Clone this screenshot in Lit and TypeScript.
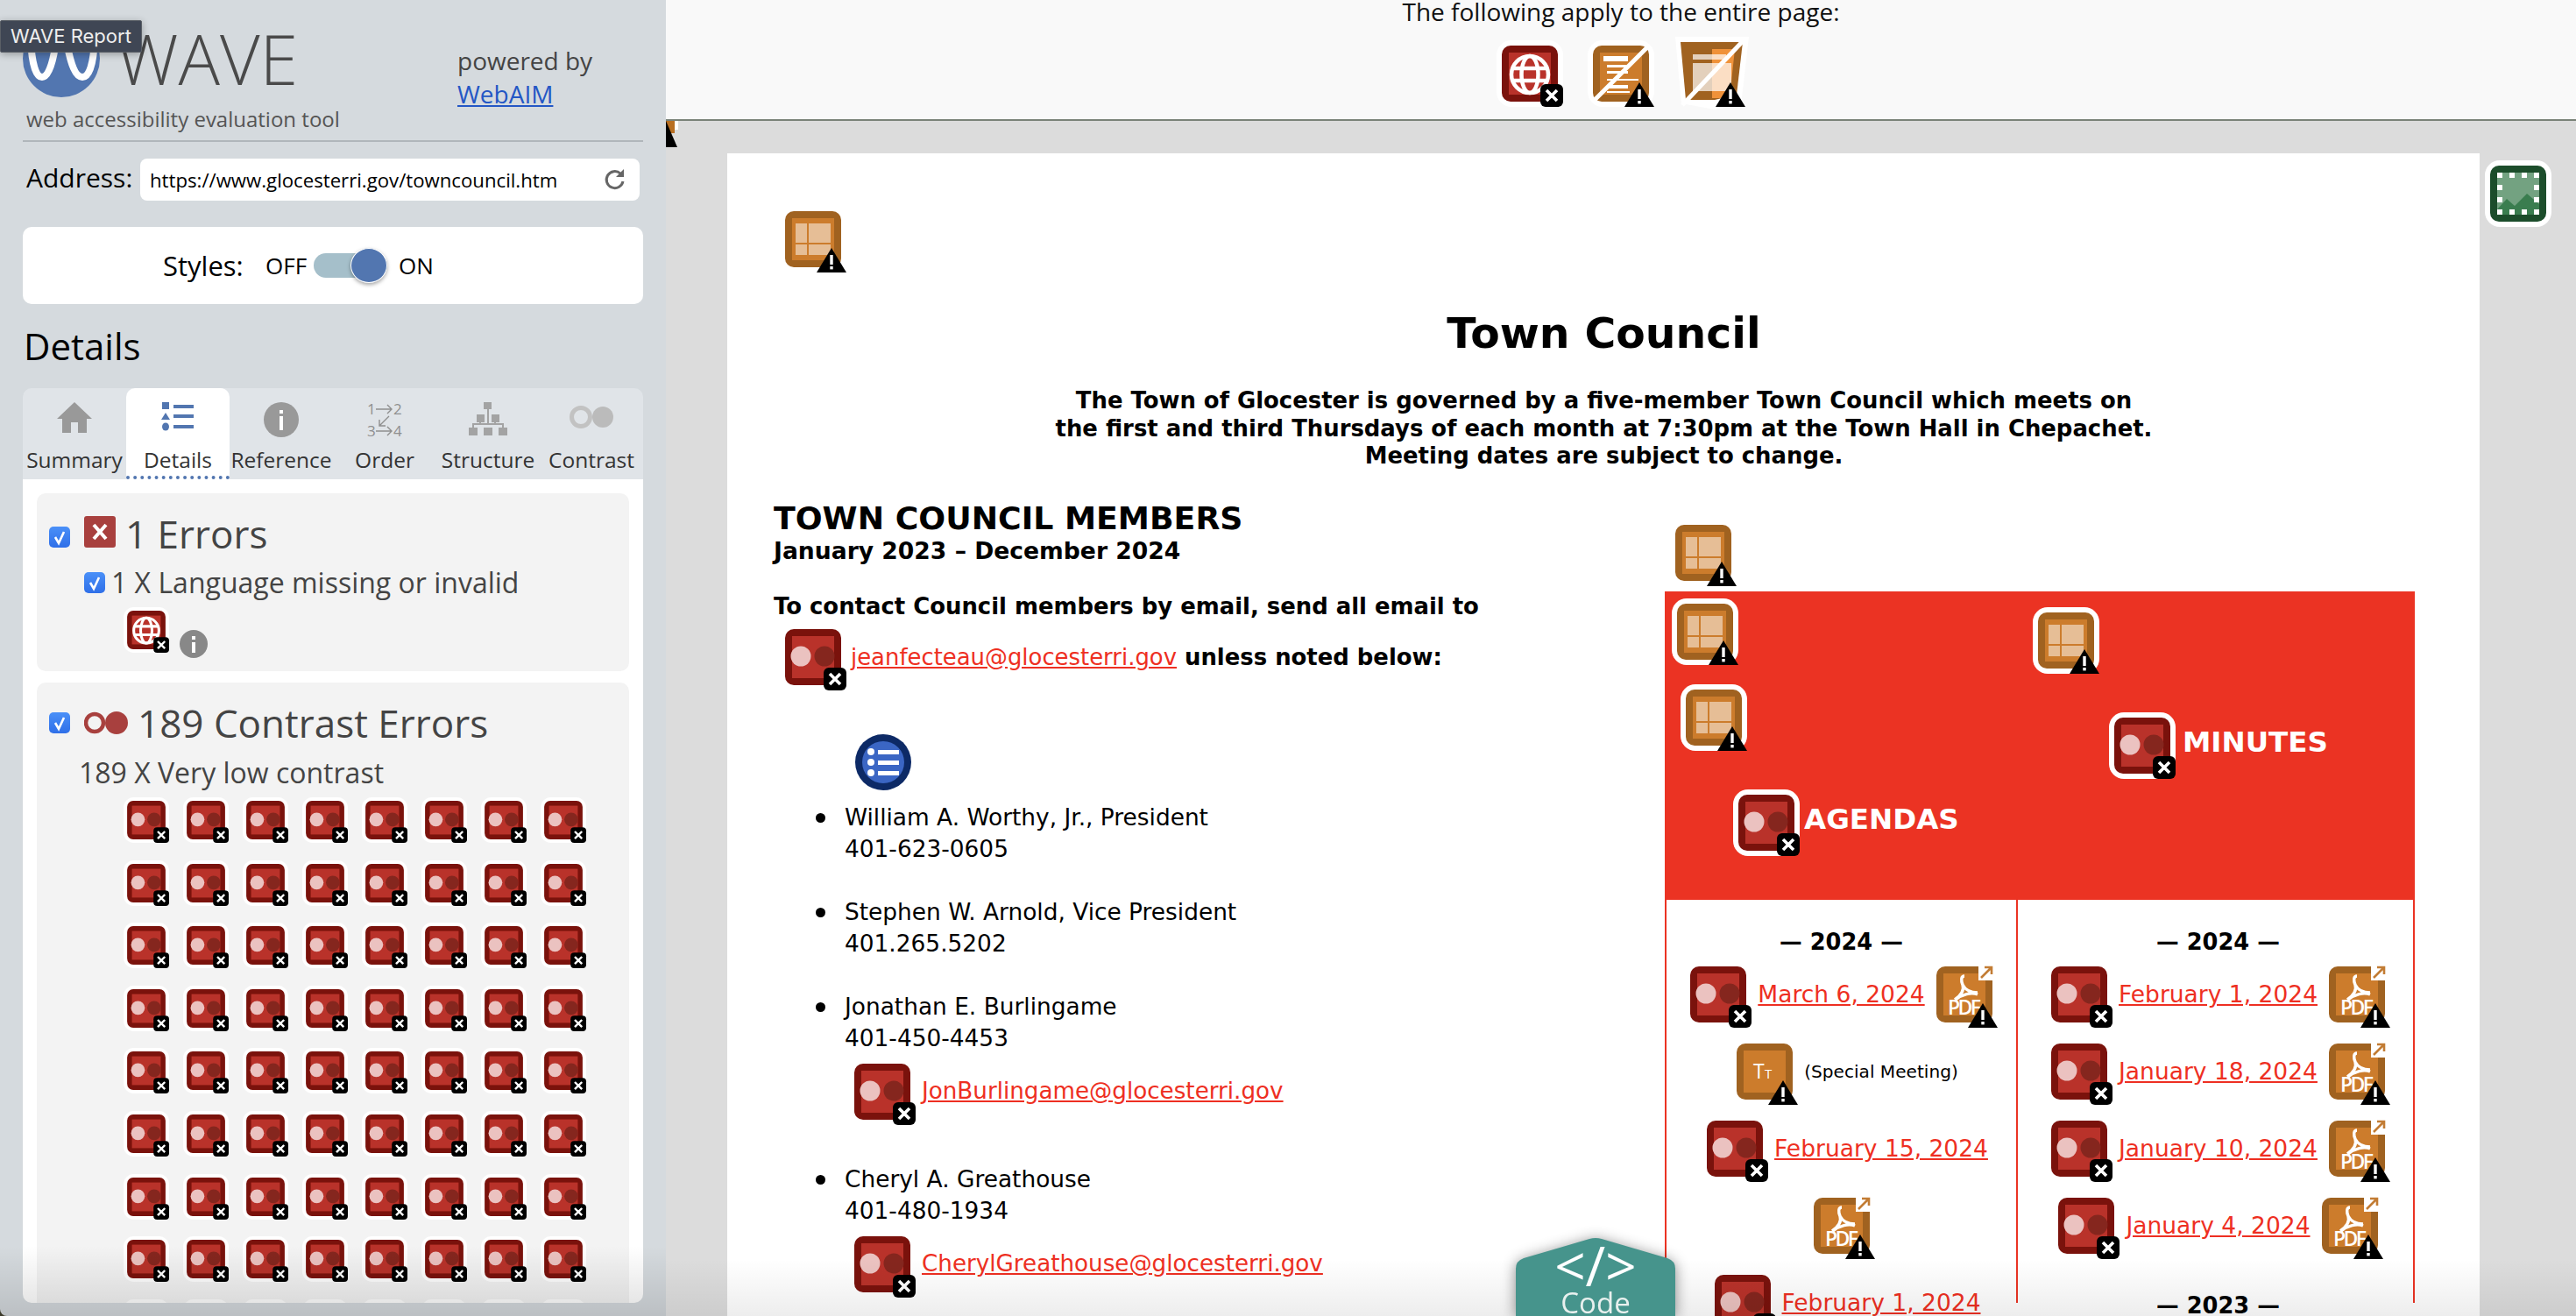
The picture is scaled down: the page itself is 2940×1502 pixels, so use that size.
import {LitElement, html, svg, css} from 'lit';
import {customElement} from 'lit/decorators.js';

const xBadge = svg`<rect x="44" y="44" width="26" height="26" rx="6" fill="#000"/><path d="M51 51l12 12M63 51l-12 12" stroke="#fff" stroke-width="3.6"/>`;
const warnBadge = svg`<path d="M53 42L70 70H36z" fill="#000"/><rect x="51.3" y="50" width="3.4" height="11" fill="#fff"/><rect x="51.3" y="63" width="3.4" height="3.4" fill="#fff"/>`;

function frame(dark: string, inner: string) {
  return svg`<rect width="64" height="64" rx="10" fill="${dark}"/><rect x="8" y="8" width="48" height="48" fill="${inner}"/>`;
}

const glyphs: Record<string, unknown> = {
  contrast: svg`${frame('#7a120c', '#b9322a')}<circle cx="18" cy="31" r="11.5" fill="#ebc2c0"/><circle cx="45" cy="31" r="11.5" fill="#85261e"/>${xBadge}`,
  lang: svg`${frame('#7a120c', '#b9322a')}<circle cx="32" cy="33" r="21" fill="#b9322a" stroke="#fff" stroke-width="4.5"/><ellipse cx="32" cy="33" rx="9.5" ry="21" fill="none" stroke="#fff" stroke-width="4.5"/><path d="M12 26h40M12 40h40" stroke="#fff" stroke-width="4.5"/>${xBadge}`,
  table: svg`${frame('#a06220', '#cc7c2c')}<path d="M12 14h13v22H12zM27 14h25v22H27zM12 38h13v12H12zM27 38h25v12H27z" fill="#e6be96"/>${warnBadge}`,
  doc: svg`${frame('#a06220', '#cc7c2c')}<path d="M12 12h28v6H12zM16 22h24v3H16zM16 29h24v3H16zM16 38h36v2H16zM18 45h22v4H18zM16 52h26v2H16z" fill="#fff"/><path d="M62 2L2 62" stroke="#fff" stroke-width="5"/>${warnBadge}`,
  tt: svg`${frame('#a06220', '#cc7c2c')}<text x="19" y="40" font-family="Open Sans" font-size="23" font-weight="400" fill="#fff">T</text><text x="32" y="40" font-family="Open Sans" font-size="15" font-weight="400" fill="#fff">T</text>${warnBadge}`,
  pdf: svg`${frame('#a06220', '#cc7c2c')}<path d="M32 11C28 11 28 16 30 21C32 27 28 33 21 38M30 21C33 27 40 30 47 30M22 38C29 32 40 29 47 32" fill="none" stroke="#fff" stroke-width="3.4"/><text x="32" y="55" text-anchor="middle" font-family="Open Sans" font-size="23" font-weight="600" fill="#fff" textLength="38">PDF</text><rect x="48" y="-2" width="19" height="18" fill="#fff"/><path d="M51 13L62 2M55 1h8v8" fill="none" stroke="#c27c34" stroke-width="2.6"/>${warnBadge}`,
  list: svg`<circle cx="32" cy="32" r="32" fill="#0d2a66"/><circle cx="32" cy="32" r="24" fill="#3b66c4"/><g fill="#fff"><circle cx="18" cy="20" r="4"/><circle cx="18" cy="32" r="4"/><circle cx="18" cy="44" r="4"/><path d="M26 18h24v5H26zM26 30h24v5H26zM26 42h24v5H26z"/></g>`,
  image: svg`${frame('#1c4d2b', '#73a281')}<path d="M8 50L19 38L28 46L42 32L56 44V56H8z" fill="#3a7d4f"/><path d="M8 8h6v6H8zM22 8h6v6h-6zM36 8h6v6h-6zM50 8h6v6h-6zM8 22h6v6H8zM50 22h6v6h-6zM8 36h6v6H8zM50 36h6v6h-6zM8 50h6v6H8zM22 50h6v6h-6zM36 50h6v6h-6zM50 50h6v6h-6z" fill="#fff"/>`,
};

function icon(name: string, halo = false, cls = '') {
  return html`<svg class="wi ${cls}" viewBox="-6 -6 76 76">
    ${halo ? svg`<rect x="-6" y="-6" width="76" height="76" rx="17" fill="#fff"/>` : ''}
    ${glyphs[name]}
  </svg>`;
}

const check = html`<span class="check"><svg viewBox="0 0 24 24" width="24" height="24"><path d="M7 12l4 7l6-13" fill="none" stroke="#fff" stroke-width="2.6"/></svg></span>`;

const shield = html`<svg class="shield" viewBox="0 0 84 84">
  <path d="M0 0H84L75 78L45 83L7 76z" fill="#fff"/>
  <path d="M6 6H77L70 66L45 72L12 72z" fill="#a06220"/>
  <path d="M42 14H68L62 70H42z" fill="#f0923a"/>
  <path d="M20 20H58V26H20zM20 30H64V58L58 62H20z" fill="#fff" opacity=".7"/>
  <path d="M78 4L8 78" stroke="#fff" stroke-width="5"/>
  <path d="M63 52L80 80H46z" fill="#000"/><rect x="61.3" y="60" width="3.4" height="11" fill="#fff"/><rect x="61.3" y="73" width="3.4" height="3.4" fill="#fff"/>
</svg>`;

const tabIcons = [
  html`<svg viewBox="0 0 40 36" width="40" height="36"><path d="M20 0L40 19H34V35H24V23H16V35H6V19H0z" fill="#999"/></svg>`,
  html`<svg viewBox="0 0 38 36" width="38" height="36"><path d="M1 0h8v8H1zM5 12l5 8H0zM14 3h23v4H14zM14 14h23v4H14zM14 26h23v4H14z" fill="#5276b0"/><ellipse cx="5" cy="28" rx="4" ry="4.5" fill="#5276b0"/></svg>`,
  html`<svg viewBox="0 0 40 40" width="40" height="40"><circle cx="20" cy="20" r="20" fill="#999"/><path d="M18 9h4v4h-4zM18 16h4v16h-4z" fill="#fff"/></svg>`,
  html`<svg viewBox="0 0 40 40" width="40" height="40"><g font-family="Open Sans" font-size="17" fill="#8f8f8f"><text x="0" y="14">1</text><text x="30" y="14">2</text><text x="0" y="39">3</text><text x="30" y="39">4</text></g><path d="M10 8h18M23 3l5 5l-5 5M10 33h18M23 28l5 5l-5 5M25 16L14 27M14 20v7h7" fill="none" stroke="#8f8f8f" stroke-width="1.4"/></svg>`,
  html`<svg viewBox="0 0 44 38" width="44" height="38"><path d="M17 0h9v8h-9zM9 14h9v9H9zM26 14h9v9h-9zM0 29h10v9H0zM17 29h10v9H17zM34 29h10v9H34z" fill="#a3a3a3"/><path d="M22 8v18M5 29v-4h34v4M13 23v2M30 23v2" fill="none" stroke="#a3a3a3" stroke-width="2"/></svg>`,
  html`<svg viewBox="0 0 50 34" width="50" height="34"><circle cx="13" cy="17" r="10.5" fill="none" stroke="#c2c2c2" stroke-width="5"/><circle cx="38" cy="17" r="12" fill="#bbb"/></svg>`,
];
const tabNames = ['Summary', 'Details', 'Reference', 'Order', 'Structure', 'Contrast'];

@customElement('app-root')
export class AppRoot extends LitElement {
  static styles = css`
    :host {
      display: flex;
      width: 2940px;
      height: 1502px;
      overflow: hidden;
      font-family: 'Open Sans', sans-serif;
      color: #000;
      background: #3b3a2a;
    }
    .wi { display: block; width: 76px; height: 76px; margin: -6px; flex: none; overflow: visible; }
    .wi.small { width: 52px; height: 52px; margin: 0; }
    .shield { display: block; width: 84px; height: 84px; }

    .side { width: 760px; height: 1502px; flex: none; box-sizing: border-box; padding: 0 26px; background: #d5dade; position: relative; overflow: hidden; border-bottom-left-radius: 8px; }
    .side-fade { position: absolute; left: 0; right: 0; bottom: 0; height: 80px; background: linear-gradient(rgba(0,0,0,0), rgba(0,0,0,.12)); pointer-events: none; }
    .tip { position: absolute; left: 0; top: 23px; width: 162px; height: 37px; background: #3f4654; border: 1px solid #5a5f66; color: #eee; font-family: Inter, sans-serif; font-size: 22px; line-height: 35px; padding-left: 11px; box-sizing: border-box; border-radius: 2px; box-shadow: 0 2px 8px rgba(0,0,0,.3); white-space: nowrap; }
    .brand { height: 160px; border-bottom: 2px solid #b0b6bb; display: flex; }
    .brand-left { width: 496px; }
    .logo { display: flex; align-items: center; gap: 19px; margin-top: 23px; height: 88px; }
    .wave { font-size: 79px; font-weight: 300; color: #4a4a4a; line-height: 88px; }
    .tagline { font-size: 24px; color: #555; margin: 8px 0 0 4px; line-height: 34px; white-space: nowrap; }
    .powered { font-size: 28px; line-height: 38px; color: #444; margin-top: 50px; }
    .powered a { color: #2457c5; display: block; text-decoration: underline; }
    .addr { display: flex; align-items: center; margin-top: 19px; }
    .addr-label { width: 134px; padding-left: 4px; box-sizing: border-box; font-size: 30px; line-height: 40px; margin-top: -4px; }
    .addr-box { width: 570px; height: 48px; background: #fff; border-radius: 8px; display: flex; align-items: center; justify-content: space-between; padding: 0 15px 0 11px; box-sizing: border-box; font-size: 22.2px; }
    .styles { margin-top: 30px; height: 88px; background: #fff; border-radius: 10px; display: flex; align-items: center; padding-left: 160px; font-size: 26px; }
    .styles-label { font-size: 31px; width: 117px; }
    .toggle { width: 84px; height: 28px; background: #a5bfca; border-radius: 14px; margin: 0 13px 0 8px; position: relative; }
    .knob { position: absolute; right: 0; top: -6px; width: 42px; height: 40px; border-radius: 50%; background: #5276b0; border: 1px solid #fff; box-sizing: border-box; box-shadow: 0 2px 4px rgba(0,0,0,.35); }
    h2.details { font-size: 42px; font-weight: 400; line-height: 52px; margin: 22px 0 22px 1px; }
    .tabs { height: 104px; background: #e0e4e8; border-radius: 10px 10px 0 0; display: grid; grid-template-columns: repeat(6, 1fr); }
    .tab { height: 100px; display: flex; flex-direction: column; align-items: center; font-size: 24.5px; color: #333; }
    .tab.on { background: #fff; border-radius: 10px 10px 0 0; height: 100px; border-bottom: 4px dotted #5276b0; }
    .tab-icon { height: 58px; margin-top: 16px; display: flex; align-items: flex-start; }
    .tab-label { line-height: 30px; margin-top: -7px; white-space: nowrap; }
    .panel { height: 940px; background: #fff; border-radius: 0 0 10px 10px; padding: 16px 16px 0 16px; box-sizing: border-box; overflow: hidden; }
    .card { background: #f3f3f3; border-radius: 10px; box-sizing: border-box; color: #444; }
    .card.one { height: 203px; margin-bottom: 13px; padding: 26px 0 0 14px; }
    .card.two { height: 800px; padding: 0 0 0 14px; }
    .check { display: block; width: 24px; height: 24px; border-radius: 5px; background: linear-gradient(#4a90f8, #2f6fe8); flex: none; }
    .check svg { display: block; }
    .title { display: flex; align-items: flex-end; font-size: 44px; line-height: 36px; }
    .title span:last-child { position: relative; top: 2px; }
    .errbox { width: 36px; height: 36px; background: #a8403e; border-radius: 3px; margin: 0 11px 0 16px; display: block; flex: none; }
    .sub { display: flex; align-items: center; margin: 28px 0 0 40px; font-size: 32px; line-height: 24px; gap: 7px; }
    .found { display: flex; align-items: flex-end; margin: 16px 0 0 85px; gap: 12px; }
    .info { display: block; margin-bottom: -6px; }
    .title2 { display: flex; align-items: center; font-size: 44px; line-height: 60px; padding-top: 16px; }
    .oo { display: block; margin: 0 11px 0 16px; }
    .lowc { font-size: 32px; line-height: 44px; margin: 5px 0 0 34px; }
    .grid { display: grid; grid-template-columns: repeat(8, 52px); column-gap: 16px; row-gap: 19.6px; margin: 6px 0 0 85px; }

    .main { flex: 1; height: 1502px; background: #dcdcdc; position: relative; overflow: hidden; }
    .bar { height: 136px; background: #f9f9f9; border-bottom: 2px solid #7a8278; text-align: center; }
    .bar-text { font-size: 28px; line-height: 26px; color: #111; }
    .bar-icons { display: flex; justify-content: center; align-items: flex-start; margin-top: 20px; padding-left: 4px; }
    .bar-icons .wi { margin: 0; }
    .bar-icons .wi + .wi { margin-left: 28px; }
    .bar-icons .shield { margin: -4px 0 0 24px; }
    .stub { position: absolute; left: 0; top: 138px; display: block; }
    .canvas { display: flex; padding: 37px 0 0 70px; }
    .page { width: 2000px; height: 1327px; background: #fff; flex: none; box-sizing: border-box; padding: 66px 74px 0 53px; overflow: hidden; font-family: 'DejaVu Sans', Verdana, sans-serif; }
    .side-icon { margin: 14px 0 0 12px; }
    .first { margin-left: 13px; }
    h1 { font-size: 48.8px; font-weight: 700; line-height: 60px; margin: 46px 0 0 0; text-align: center; padding-left: 22px; }
    .lead { font-size: 25.9px; font-weight: 700; line-height: 31.5px; margin: 31px 0 0 0; text-align: center; padding-left: 22px; }
    .cols { display: flex; margin-top: 23px; }
    .left { width: 1017px; flex: none; padding-top: 12px; box-sizing: border-box; }
    .left h3 { font-size: 36.3px; line-height: 40px; margin: 0; font-weight: 700; }
    .dates { font-size: 26.6px; font-weight: 700; line-height: 33px; }
    .contact { font-size: 25.9px; font-weight: 700; line-height: 34px; margin-top: 30px; }
    .email { display: flex; align-items: center; gap: 11px; margin: 9px 0 0 13px; font-size: 25.9px; font-weight: 700; }
    a.lnk { color: #ee2f22; text-decoration: underline; font-weight: 400; white-space: nowrap; }
    .listicon { margin: 56px 0 0 93px; }
    ul { margin: 13px 0 0 0; padding: 0 0 0 81px; font-size: 26.4px; line-height: 36.5px; list-style: none; }
    li { margin-bottom: 35px; position: relative; }
    li::before { content: ''; position: absolute; left: -33px; top: 13px; width: 11px; height: 11px; border-radius: 50%; background: #000; }
    .lirow { display: flex; align-items: center; gap: 13px; margin: 10px 0 0 11px; padding-bottom: 15px; font-size: 26.2px; }
    .right { width: 856px; flex: none; padding-top: 33px; }
    .top-icon { margin: 6px 0 12px 12px; }
    .band { height: 352px; background: #eb3323; display: flex; }
    .band-l { width: 403px; padding-top: 8px; flex: none; }
    .band-r { padding-top: 18px; }
    .band .wi { margin: 0; }
    .band .wi.a { margin-left: 8px; }
    .band .wi.c { margin: 22px 0 0 18px; }
    .band .wi.b { margin-left: 17px; }
    .hd { display: flex; align-items: center; color: #fff; font-weight: 700; font-size: 32.5px; gap: 5px; }
    .hd span { margin-bottom: 8px; }
    .hd.ag { margin: 44px 0 0 78px; }
    .hd.mi { margin: 44px 0 0 104px; gap: 8px; }
    .tbl { display: flex; height: 460px; }
    .cell { box-sizing: border-box; border-right: 2px solid #eb3323; padding-top: 32px; }
    .cell.l { width: 403px; border-left: 2px solid #eb3323; }
    .cell.r { width: 453px; padding-left: 6px; }
    .yr { font-size: 25.7px; font-weight: 700; line-height: 32px; text-align: center; }
    .yr.next { margin-top: 31px; }
    .row { height: 88px; display: flex; align-items: center; justify-content: center; gap: 13px; font-size: 26.5px; }
    .row.shift { padding-left: 14px; }
    .row .note { font-size: 20.1px; }

    .fade { position: absolute; left: 0; right: 0; bottom: 0; height: 65px; background: linear-gradient(rgba(0,0,0,0), rgba(0,0,0,.07)); pointer-events: none; }
    .code { position: absolute; left: 970px; top: 1413px; width: 182px; height: 89px; filter: drop-shadow(0 2px 8px rgba(0,0,0,.45)); color: #fff; text-align: center; }
    .code svg { position: absolute; left: 0; top: 0; display: block; }
    .code-sym { position: relative; font-size: 62px; font-weight: 500; line-height: 56px; height: 56px; margin-top: 3px; }
    .code-lab { position: relative; font-size: 33px; line-height: 30px; color: #e8f0ee; }
  `;

  render() {
    const left = [
      ['contrast', 'March 6, 2024', true],
      ['tt', '', false],
      ['contrast', 'February 15, 2024', false],
      ['', '', true],
      ['contrast', 'February 1, 2024', false],
    ] as const;
    const right = ['February 1, 2024', 'January 18, 2024', 'January 10, 2024', 'January 4, 2024'];
    return html`
      <aside class="side">
        <div class="brand">
          <div class="brand-left">
            <div class="logo">
              <svg width="88" height="88" viewBox="0 0 88 88"><circle cx="44" cy="44" r="44" fill="#5276b0"/><path d="M9 20C10 50 15 65 22 65C29 65 34 50 37 30L44 12L51 30C55 50 60 65 68 65C76 65 81 50 82 20" fill="none" stroke="#fff" stroke-width="8"/></svg>
              <span class="wave">WAVE</span>
            </div>
            <div class="tagline">web accessibility evaluation tool</div>
          </div>
          <div class="powered">powered by<a href="#">WebAIM</a></div>
        </div>
        <div class="addr">
          <span class="addr-label">Address:</span>
          <div class="addr-box">
            <span>https://www.glocesterri.gov/towncouncil.htm</span>
            <svg width="26" height="26" viewBox="0 0 26 26"><path d="M22 15a9.5 9.5 0 1 1-3-9" fill="none" stroke="#666" stroke-width="3"/><path d="M23 1v9h-9z" fill="#666"/></svg>
          </div>
        </div>
        <div class="styles">
          <span class="styles-label">Styles:</span>
          <span>OFF</span>
          <div class="toggle"><div class="knob"></div></div>
          <span>ON</span>
        </div>
        <h2 class="details">Details</h2>
        <div class="tabs">
          ${tabNames.map((n, i) => html`<div class="tab ${i === 1 ? 'on' : ''}">
            <div class="tab-icon">${tabIcons[i]}</div>
            <div class="tab-label">${n}</div>
          </div>`)}
        </div>
        <div class="panel">
          <div class="card one">
            <div class="title">
              ${check}
              <svg class="errbox" viewBox="0 0 36 36"><path d="M11 10l14 16M25 10L11 26" stroke="#fff" stroke-width="4"/></svg>
              <span>1 Errors</span>
            </div>
            <div class="sub">${check}<span>1 X Language missing or invalid</span></div>
            <div class="found">
              ${icon('lang', true, 'small')}
              <svg class="info" width="32" height="32" viewBox="0 0 32 32"><circle cx="16" cy="16" r="16" fill="#888"/><path d="M14 7h4v4h-4zM14 14h4v12h-4z" fill="#fff"/></svg>
            </div>
          </div>
          <div class="card two">
            <div class="title2">
              ${check}
              <svg class="oo" width="50" height="26" viewBox="0 0 50 26"><circle cx="12" cy="13" r="10" fill="none" stroke="#a8403e" stroke-width="4.5"/><circle cx="37" cy="13" r="13" fill="#a8403e"/></svg>
              <span>189 Contrast Errors</span>
            </div>
            <div class="lowc">189 X Very low contrast</div>
            <div class="grid">
              ${Array.from({length: 72}, () => icon('contrast', true, 'small'))}
            </div>
          </div>
        </div>
        <div class="side-fade"></div>
        <div class="tip">WAVE Report</div>
      </aside>
      <main class="main">
        <div class="bar">
          <div class="bar-text">The following apply to the entire page:</div>
          <div class="bar-icons">${icon('lang', true)}${icon('doc', true)}${shield}</div>
        </div>
        <svg class="stub" width="20" height="32" viewBox="0 0 20 32"><path d="M0 0H10V14H0z" fill="#b86f22"/><path d="M14 0V10H10V0z" fill="#fff"/><path d="M0 0L13 30H0z" fill="#000"/></svg>
        <div class="canvas">
          <div class="page">
            <div class="first">${icon('table')}</div>
            <h1>Town Council</h1>
            <div class="lead">The Town of Glocester is governed by a five-member Town Council which meets on<br />the first and third Thursdays of each month at 7:30pm at the Town Hall in Chepachet.<br />Meeting dates are subject to change.</div>
            <div class="cols">
              <div class="left">
                <h3>TOWN COUNCIL MEMBERS</h3>
                <div class="dates">January 2023 – December 2024</div>
                <div class="contact">To contact Council members by email, send all email to</div>
                <div class="email">${icon('contrast')}<span><a class="lnk" href="#">jeanfecteau@glocesterri.gov</a> unless noted below:</span></div>
                <div class="listicon">${icon('list')}</div>
                <ul>
                  <li>William A. Worthy, Jr., President<br />401-623-0605</li>
                  <li>Stephen W. Arnold, Vice President<br />401.265.5202</li>
                  <li>Jonathan E. Burlingame<br />401-450-4453
                    <div class="lirow">${icon('contrast')}<a class="lnk" href="#">JonBurlingame@glocesterri.gov</a></div>
                  </li>
                  <li>Cheryl A. Greathouse<br />401-480-1934
                    <div class="lirow">${icon('contrast')}<a class="lnk" href="#">CherylGreathouse@glocesterri.gov</a></div>
                  </li>
                </ul>
              </div>
              <div class="right">
                <div class="top-icon">${icon('table')}</div>
                <div class="band">
                  <div class="band-l">
                    ${icon('table', true, 'a')}
                    ${icon('table', true, 'c')}
                    <div class="hd ag">${icon('contrast', true)}<span>AGENDAS</span></div>
                  </div>
                  <div class="band-r">
                    ${icon('table', true, 'b')}
                    <div class="hd mi">${icon('contrast', true)}<span>MINUTES</span></div>
                  </div>
                </div>
                <div class="tbl">
                  <div class="cell l">
                    <div class="yr">— 2024 —</div>
                    ${left.map(([ic, label, pdf]) => html`<div class="row ${ic && !pdf ? 'shift' : ''}">
                      ${ic ? icon(ic) : ''}
                      ${label ? html`<a class="lnk" href="#">${label}</a>` : ''}
                      ${ic === 'tt' ? html`<span class="note">(Special Meeting)</span>` : ''}
                      ${pdf ? icon('pdf') : ''}
                    </div>`)}
                  </div>
                  <div class="cell r">
                    <div class="yr">— 2024 —</div>
                    ${right.map(label => html`<div class="row">${icon('contrast')}<a class="lnk" href="#">${label}</a>${icon('pdf')}</div>`)}
                    <div class="yr next">— 2023 —</div>
                  </div>
                </div>
              </div>
            </div>
          </div>
          <div class="side-icon">${icon('image', true)}</div>
        </div>
        <div class="fade"></div>
        <div class="code">
          <svg width="182" height="89" viewBox="0 0 182 89"><path d="M0 89V35Q0 26 9 23L84 1Q91 -1 98 1L173 23Q182 26 182 35V89z" fill="#46948c"/></svg>
          <div class="code-sym">&lt;/&gt;</div>
          <div class="code-lab">Code</div>
        </div>
      </main>
    `;
  }
}
